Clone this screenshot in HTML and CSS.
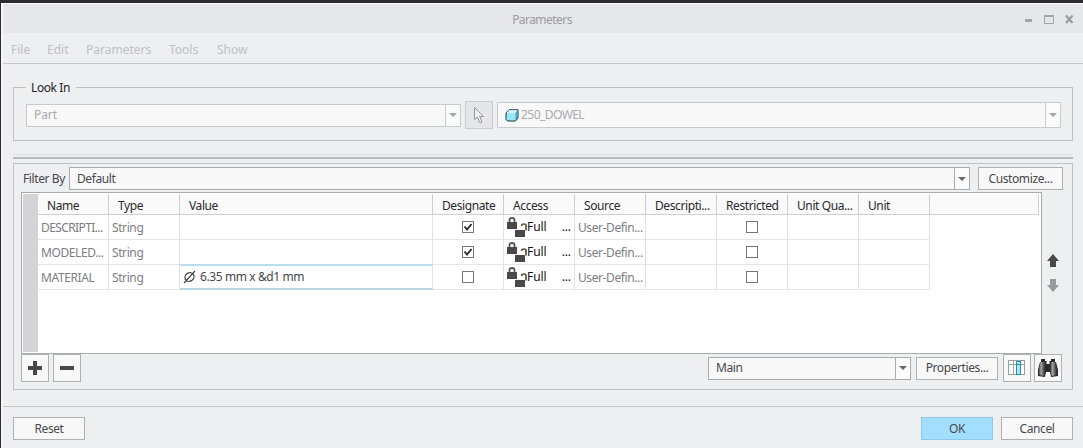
FILE: index.html
```html
<!DOCTYPE html>
<html lang="en">
<head>
<meta charset="utf-8">
<title>Parameters</title>
<link rel="stylesheet" href="styles.css">
</head>
<body>
<svg class="defs" width="0" height="0">
  <symbol id="locks" viewBox="0 0 21 21">
    <path d="M2.500 6V3Q2.500 1 5 1T7.500 3V6" fill="none" stroke="#555558" stroke-width="1.800"/>
    <rect x="0" y="5" width="10" height="7" fill="#48484b"/>
    <path d="M14.700 9V8.500Q14.700 7 16.900 7T19 8.500V13.500" fill="none" stroke="#5a5544" stroke-width="1.700"/>
    <rect x="8" y="13" width="10" height="7" fill="#48484b"/>
  </symbol>
  <symbol id="check" viewBox="0 0 10 10"><path d="M1.500 4.500L4 7.500L8.500 2" fill="none" stroke="#2b2b2e" stroke-width="1.900"/></symbol>
</svg>
<div class="window">
  <header class="titlebar">
    <span class="title">Parameters</span>
    <svg class="controls" width="50" height="12" viewBox="0 0 50 12">
      <rect x="0" y="5" width="7" height="3" fill="#a3a4a7"/>
      <path d="M19.500 2V9.500H28.500V2" fill="none" stroke="#a3a4a7"/><rect x="19" y="1" width="10" height="2" fill="#a3a4a7"/>
      <path d="M41 1.500L47.500 9M47.500 1.500L41 9" stroke="#9b9c9f" stroke-width="2.300"/>
    </svg>
  </header>
  <nav class="menu"><span class="m1">File</span><span class="m2">Edit</span><span class="m3">Parameters</span><span class="m4">Tools</span><span>Show</span></nav>
  <fieldset class="look">
    <legend>Look In</legend>
    <div class="look-row">
      <div class="combo disabled part"><span>Part</span><i class="drop"></i></div>
      <div class="pick"><svg width="12" height="19" viewBox="0 0 12 19"><path d="M1.500 1.500V13.500L4.300 11L7 17L9 16L6.700 10.500H10.500Z" fill="#f1f2f4" stroke="#96979a"/></svg></div>
      <div class="combo disabled model">
        <svg width="14" height="13" viewBox="0 0 14 13"><path d="M1 4L4 .8H13V9L10.500 12H2.500L1 10.500Z" fill="#9be5fb" stroke="#20313c"/><path d="M1.500 4L4 1.300H12.500L10 4Z" fill="#d9f5fc"/><path d="M10.500 4L12.600 1.500V9L10.500 11.500Z" fill="#4f9fc0"/></svg>
        <span>250_DOWEL</span><i class="drop"></i></div>
    </div>
  </fieldset>
  <div class="splitter"></div>
  <main class="panel">
    <div class="filter"><label>Filter By</label><div class="combo wide"><span>Default</span><i class="drop"></i></div><button class="customize">Customize...</button></div>
    <div class="body">
      <div class="sheet">
        <div class="gutter"></div>
        <div class="grid">
          <div class="row head"><span>Name</span><span>Type</span><span>Value</span><span>Designate</span><span>Access</span><span>Source</span><span>Descripti...</span><span>Restricted</span><span>Unit Qua...</span><span>Unit</span><span></span></div>
          <div class="row"><span class="tight">DESCRIPTI...</span><span>String</span><span></span><span class="mid"><svg class="box"><use href="#check"/></svg></span><span class="access"><svg><use href="#locks"/></svg><b>Full</b><b>...</b></span><span>User-Defin...</span><span></span><span class="mid"><i class="box"></i></span><span></span><span></span></div>
          <div class="row"><span>MODELED...</span><span>String</span><span></span><span class="mid"><svg class="box"><use href="#check"/></svg></span><span class="access"><svg><use href="#locks"/></svg><b>Full</b><b>...</b></span><span>User-Defin...</span><span></span><span class="mid"><i class="box"></i></span><span></span><span></span></div>
          <div class="row"><span>MATERIAL</span><span>String</span><span class="editing"><svg width="13" height="14" viewBox="0 0 13 14"><ellipse cx="6.500" cy="7" rx="4.700" ry="4.200" fill="none" stroke="#444447" stroke-width="1.200" transform="rotate(-30 6.500 7)"/><path d="M1 13L12 1" stroke="#444447" stroke-width="1.200"/></svg>6.35 mm x &amp;d1 mm</span><span class="mid"><i class="box"></i></span><span class="access"><svg><use href="#locks"/></svg><b>Full</b><b>...</b></span><span>User-Defin...</span><span></span><span class="mid"><i class="box"></i></span><span></span><span></span></div>
        </div>
      </div>
      <div class="arrows">
        <svg width="12" height="14" viewBox="0 0 12 14"><path d="M6 0L12 7H9V13H3V7H0Z" fill="#48484b"/></svg>
        <svg width="12" height="14" viewBox="0 0 12 14"><path d="M6 13L12 6H9V0H3V6H0Z" fill="#98999c"/></svg>
      </div>
    </div>
    <div class="tools">
      <button class="icon"><svg width="14" height="14" viewBox="0 0 14 14"><path d="M5 0H9V5H14V9H9V14H5V9H0V5H5Z" fill="#48484b"/></svg></button>
      <button class="icon second"><svg width="14" height="14" viewBox="0 0 14 14"><path d="M0 5H14V9H0Z" fill="#48484b"/></svg></button>
      <div class="combo main"><span>Main</span><i class="drop"></i></div>
      <button class="properties">Properties...</button>
      <button class="icon columns"><svg width="18" height="16" viewBox="0 0 18 16"><rect x=".5" y=".5" width="16" height="14" fill="#fff" stroke="#94a29f"/><path d="M1 4.500H16M5.500 1V14" stroke="#9aaaa5"/><rect x="8.500" y="1.500" width="4" height="13" fill="#a7e9ff" stroke="#288ba8"/><path d="M8.500 4.500H12.500" stroke="#288ba8"/></svg></button>
      <button class="icon"><svg width="22" height="20" viewBox="0 0 22 20">
        <defs><linearGradient id="barrel"><stop offset="0" stop-color="#303033"/><stop offset=".35" stop-color="#a5a5a8"/><stop offset=".7" stop-color="#505053"/><stop offset="1" stop-color="#202023"/></linearGradient></defs>
        <path d="M4 1H8V3H9.500V6H12.500V3H14V1H18V4H19L21 12V18L14 19L13 14H9L8 19L1 18V12L3 4H4Z" fill="#29292c"/>
        <path d="M3.500 4H8.500L9 13L7.500 18L1.500 17V12Z" fill="url(#barrel)"/><path d="M13.500 4H18.500L20.500 12V17L14.500 18L13 13Z" fill="url(#barrel)"/>
      </svg></button>
    </div>
  </main>
  <footer class="footer"><button>Reset</button><button class="ok">OK</button><button>Cancel</button></footer>
</div>
</body>
</html>
```
FILE: styles.css
```css
* { box-sizing: border-box; }
body { margin: 0; width: 1083px; height: 448px; overflow: hidden; background: #2d2d31; font: 12px/16px "Noto Sans", "Open Sans", sans-serif; letter-spacing: -.4px; color: #48484c; }
.defs { display: block; height: 0; }
svg { flex: none; display: block; }
.window { margin: 3px 0 0 1px; height: 445px; background: #eeeff1; border-top: 1px solid #fff; border-left: 2px solid #f7f7f8; }
.titlebar { height: 29px; padding-top: 2px; background: #e6e7ea; display: flex; align-items: center; position: relative; }
.title { width: 1078px; text-align: center; color: #9b9c9f; letter-spacing: -.55px; }
.controls { position: absolute; right: 8px; top: 10px; }
.menu { height: 31px; border-bottom: 1px solid #c4c5c8; display: flex; padding: 9px 0 0 8px; color: #bfc0c3; letter-spacing: 0; }
.m1 { width: 36px; } .m2 { width: 39px; } .m3 { width: 83px; } .m4 { width: 48px; }
.look { margin: 15px 10px 0; padding: 0 0 0 12px; height: 62px; border: 1px solid #c1c2c5; min-width: 0; }
.look legend { padding: 1px 6px 0 5px; height: 16px; color: #242428; }
.look-row { display: flex; align-items: center; height: 28px; margin-top: 6px; }
.combo { height: 23px; border: 1px solid #a9abae; background: #f8f8f9; display: flex; align-items: center; padding-left: 7px; }
.combo span { flex: 1; }
.drop { width: 15px; height: 100%; border-left: 1px solid #a9abae; display: grid; place-items: center; background: #fbfbfc; }
.drop::after { content: ""; border: 4px solid transparent; border-top-color: #68686b; border-bottom: 0; }
.disabled { border-color: #c9cacd; color: #aaabae; }
.disabled .drop { border-color: #c9cacd; }
.disabled .drop::after { border-top-color: #a2a3a6; }
.part { width: 435px; letter-spacing: -.1px; }
.pick { width: 28px; height: 28px; margin: 0 4px; border: 1px solid #cbccd0; background: #e5e6e9; display: grid; place-items: center; }
.model { width: 564px; height: 26px; letter-spacing: -.55px; }
.model svg { margin-right: 2px; }
.splitter { height: 5px; margin: 13px 10px 0; border-top: 1px solid #dedfe1; border-bottom: 2px solid #b9babd; }
.panel { margin: 4px 10px 0; height: 227px; border: 1px solid #c1c2c5; padding: 3px 7px 0; }
.filter { height: 23px; display: flex; }
.filter label { width: 48px; padding: 4px 0 0 2px; white-space: nowrap; }
.wide { width: 901px; margin-right: 8px; }
button { font: inherit; letter-spacing: inherit; color: inherit; height: 23px; padding: 0; border: 1px solid #aeb0b4; background: #f8f8f9; white-space: nowrap; }
.customize { width: 85px; }
.body { display: flex; margin-top: 2px; }
.sheet { width: 1021px; height: 162px; border: 1px solid #a9abae; background: #fff; padding: 1px 2px 0 1px; display: flex; }
.gutter { width: 15px; height: 158px; background: #d4d4d6; }
.grid { width: 1001px; }
.row { display: grid; grid-template-columns: 71px 71px 253px 71px 71px 71px 71px 71px 71px 71px 109px; height: 25px; color: #7d7e81; }
.row > span { border-right: 1px solid #e2e2e5; border-bottom: 1px solid #e5e5e8; padding: 5px 0 0 3px; white-space: nowrap; overflow: hidden; }
.row > .tight { letter-spacing: -.6px; }
.head { height: 21px; color: #29292d; }
.head > span { border-right-color: #cdced1; border-bottom-color: #ced0d3; background: #fafafb; padding: 4px 0 0 9px; }
.row > .mid { padding: 6px 0 0; display: flex; justify-content: center; align-items: flex-start; }
.box { width: 12px; height: 12px; border: 1px solid #77787b; background: #fff; }
.row > .access { display: flex; padding: 2px 3px 0; color: #111114; letter-spacing: -.1px; }
.access svg { width: 21px; height: 21px; margin-right: -1px; }
.access b { font-weight: 400; padding-top: 2px; }
.access b:last-child { margin-left: auto; }
.row > .editing { display: flex; align-items: center; padding: 0 0 0 3px; gap: 4px; border-top: 2px solid #badfec; border-bottom: 2px solid #bad7e8; color: #48484c; margin-top: -1px; }
.arrows { padding: 62px 0 0 5px; display: flex; flex-direction: column; gap: 11px; }
.tools { display: flex; align-items: center; height: 28px; margin-right: 3px; }
.icon { width: 28px; height: 28px; display: grid; place-items: center; }
.second { margin-left: 4px; }
.main { width: 203px; margin: 0 5px 0 auto; }
.properties { width: 82px; }
.columns { margin: 0 3px 0 5px; }
.footer { height: 42px; margin-top: 16px; border-top: 1px solid #c4c5c8; padding: 10px 10px 0; display: flex; gap: 8px; }
.footer button { width: 72px; }
.footer .ok { margin-left: auto; background: #a2dfff; border-color: #91c8e7; }
```
